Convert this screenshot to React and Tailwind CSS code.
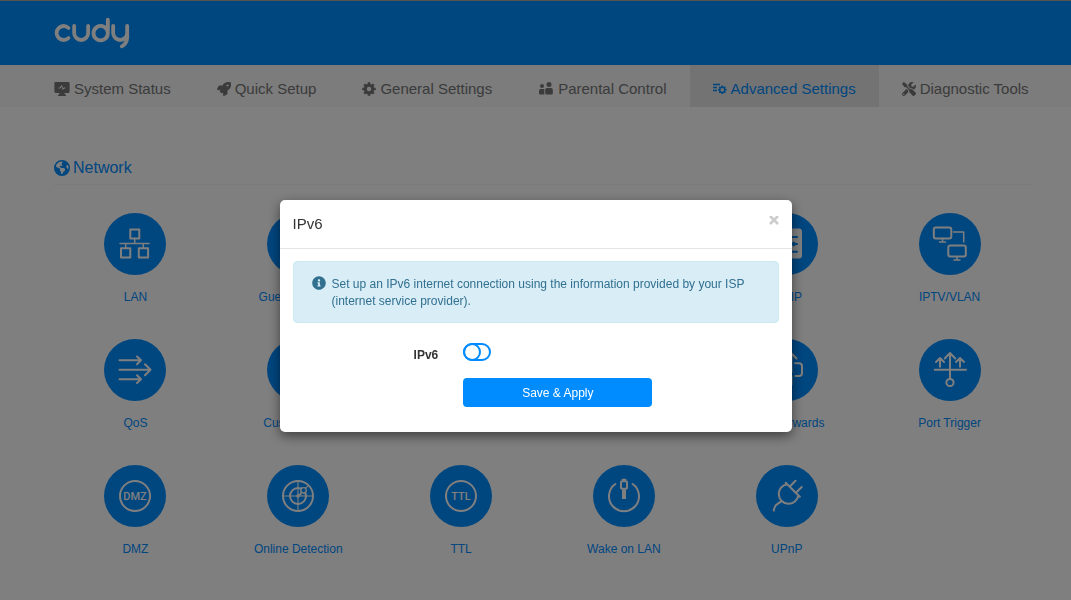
import React from "react";
import { FaRocket, FaTools, FaInfoCircle } from "react-icons/fa";
import { FaEarthAmericas } from "react-icons/fa6";

const MonitorPulseIcon = () => (
  <svg viewBox="0 0 16 16" className="size-4" aria-hidden="true">
    <path
      fill="currentColor"
      d="M1.5 1h13A1.2 1.2 0 0 1 15.6 2.2v8.6a1.2 1.2 0 0 1-1.1 1.2H10.5l.5 1.8h1v1.2H4v-1.2h1l.5-1.8H1.5A1.2 1.2 0 0 1 .4 10.8V2.2A1.2 1.2 0 0 1 1.5 1z"
    />
    <path d="M4.500 7h1.800l1.400-2.500 1.300 3.800 .9-1.300H11.500" fill="none" stroke="#f8f8f8" strokeWidth="1" />
  </svg>
);

const FamilyIcon = () => (
  <svg viewBox="0 0 16 16" className="size-4" fill="currentColor" aria-hidden="true">
    <circle cx="4" cy="5" r="2" />
    <circle cx="11" cy="3.500" r="2.500" />
    <path d="M1 9.500A1.500 1.500 0 0 1 2.500 8h3.800V13.500H2a1 1 0 0 1-1-1z" />
    <path d="M7.200 8.800A1.800 1.800 0 0 1 9 7h4a1.800 1.800 0 0 1 1.800 1.800v3.500a1.200 1.200 0 0 1-1.200 1.200H8.400a1.200 1.200 0 0 1-1.200-1.200z" />
  </svg>
);

const GearIcon = () => (
  <svg viewBox="0 0 14 14" className="size-3.5" fill="none" stroke="currentColor" aria-hidden="true">
    <circle cx="7" cy="7" r="3.700" strokeWidth="3" />
    <path
      strokeWidth="2.600"
      d="M7 .3V3M7 11V13.700M.3 7H3M11 7H13.700M2.300 2.300L4 4M10 10L11.700 11.700M2.300 11.700L4 10M10 4L11.700 2.300"
    />
  </svg>
);

const ListGearIcon = () => (
  <svg viewBox="0 0 14 14" className="size-3.5" fill="none" stroke="currentColor" aria-hidden="true">
    <path strokeWidth="1.400" d="M0 2.500H7M0 5.500H4M0 8.500H4" />
    <circle cx="9.300" cy="7.800" r="2.600" strokeWidth="1.500" />
    <path
      strokeWidth="1.600"
      d="M9.300 3.500V5.300M9.300 10.300V12.100M5 7.800H6.800M11.800 7.800H13.600M6.300 4.800L7.500 6M11.100 9.600L12.300 10.800M6.300 10.800L7.500 9.600M11.100 6L12.300 4.800"
    />
  </svg>
);

const Logo = () => (
  <svg
    viewBox="0 0 230 96"
    className="h-8 w-[77px]"
    fill="none"
    stroke="white"
    strokeWidth="11.500"
    strokeLinecap="round"
    strokeLinejoin="round"
    role="img"
    aria-label="cudy"
  >
    <path d="M43 33A21 21 0 1 0 43 63" />
    <path d="M60 27V48A21 21 0 0 0 102 48V27" />
    <path d="M161 8V49A21.500 21.500 0 1 1 161 48" />
    <path d="M177 27V48A21 21 0 0 0 219 48V27M219 46V62Q218 80 203 88" />
  </svg>
);

const drawings = {
  lan: (
    <>
      <rect x="26.300" y="16.500" width="9" height="9" />
      <rect x="17" y="35.300" width="9.300" height="9.300" />
      <rect x="34.800" y="35.300" width="9.300" height="9.300" />
      <path d="M16 30.500H45M30.700 25.500V30.500M21.700 30.500V35M39.300 30.500V35" strokeWidth="1.500" />
    </>
  ),
  guest: (
    <path d="M16 26A21 21 0 0 1 46 26M21 32A14 14 0 0 1 41 32M26 38A7 7 0 0 1 36 38M31 43V44" />
  ),
  list: (
    <>
      <rect x="16" y="15.500" width="30" height="30" rx="3" fill="white" stroke="none" />
      <path d="M34 24H41M34 31H41M34 38.700H41M21 24H29M21 31H29M21 38.700H29" stroke="#008cff" />
      <path d="M37.500 29.500L39.500 31L37.500 32.500" stroke="#008cff" />
    </>
  ),
  iptv: (
    <>
      <rect x="14.800" y="14.500" width="17.500" height="11" rx="2" />
      <path d="M23.500 26V29M20.500 29H26.500M34.500 19H44.700V29" strokeWidth="1.500" />
      <rect x="29.300" y="32.500" width="17.500" height="11" rx="2" />
      <path d="M38 44V47M35 47H41" strokeWidth="1.500" />
    </>
  ),
  qos: (
    <path d="M15.500 21.300H37M33 17.500L37 21.300L33 25.200M15.500 30.700H46.500M41 25.300L46.500 30.700L41 36.200M15.500 40.200H37M33 36.300L37 40.200L33 44" />
  ),
  globe: (
    <>
      <circle cx="31" cy="31" r="15" />
      <path d="M16 31H46M31 16C22 24 22 38 31 46C40 38 40 24 31 16" />
    </>
  ),
  forward: (
    <path d="M30.500 19.500L35.500 14.500L40.500 19.500M35.500 15V33M39 24.300H43A3 3 0 0 1 46 27.300V34A3 3 0 0 1 43 37H39.500M31.500 37H19A3 3 0 0 1 16 34V27.300A3 3 0 0 1 19 24.300H31.500M35.500 37V45.500" />
  ),
  trigger: (
    <>
      <path d="M15.700 30.700H47M31 14.500V39.500M25.700 19.500L31 14L36.300 19.500M21 19.500V27.700M17 23L21 19L25 23M41 19.500V27.700M37 23L41 19L45 23" />
      <circle cx="31" cy="43.500" r="3.600" />
    </>
  ),
  dmz: (
    <>
      <circle cx="31" cy="31" r="15" />
      <text x="31" y="35" textAnchor="middle" fill="white" stroke="none" className="font-[Roboto] text-[11px] font-medium">DMZ</text>
    </>
  ),
  detection: (
    <>
      <circle cx="31" cy="31" r="15" />
      <circle cx="31" cy="31" r="8" />
      <path d="M31 16V46M16 31H46M31 31L34.500 27.500M34 22.500V30" strokeWidth="1.100" />
      <circle cx="36.600" cy="25.300" r="2.700" fill="#008cff" strokeWidth="1.300" />
      <circle cx="31" cy="31" r="1.800" fill="white" stroke="none" />
      <path d="M38.500 23.300L40.500 21.300" strokeWidth="1.100" />
    </>
  ),
  ttl: (
    <>
      <circle cx="31" cy="31" r="15" />
      <text x="31" y="35" textAnchor="middle" fill="white" stroke="none" className="font-[Roboto] text-[11px] font-medium">TTL</text>
    </>
  ),
  wake: (
    <>
      <path d="M22.300 19A15 15 0 1 0 39.700 19" />
      <rect x="28" y="16.300" width="6" height="7.500" rx="1" />
      <path d="M29.500 14.800H32.500" />
      <path d="M31 24.500V34" strokeWidth="4" strokeLinecap="butt" />
    </>
  ),
  plug: (
    <path d="M29.700 17.700L43.800 31.700M31.300 19.300A9.800 9.800 0 1 0 42.300 30.300M34.300 21L39.500 15.800M40.500 27.200L45.700 22M25.500 36C23 38.500 20 39 19 41.500C18.300 43.200 18 44 17.800 45.500" />
  ),
};

const tabs = [
  { label: "System Status", icon: <MonitorPulseIcon /> },
  { label: "Quick Setup", icon: <FaRocket className="size-3.5" /> },
  { label: "General Settings", icon: <GearIcon /> },
  { label: "Parental Control", icon: <FamilyIcon /> },
  { label: "Advanced Settings", icon: <ListGearIcon />, active: true },
  { label: "Diagnostic Tools", icon: <FaTools className="size-3.5" /> },
];

const features = [
  { label: "LAN", icon: "lan" },
  { label: "Guest Network", icon: "guest" },
  { label: "My IP", icon: "list", column: "col-start-5" },
  { label: "IPTV/VLAN", icon: "iptv" },
  { label: "QoS", icon: "qos" },
  { label: "Custom DNS", icon: "globe" },
  { label: "Port Forwards", icon: "forward", column: "col-start-5" },
  { label: "Port Trigger", icon: "trigger" },
  { label: "DMZ", icon: "dmz" },
  { label: "Online Detection", icon: "detection" },
  { label: "TTL", icon: "ttl" },
  { label: "Wake on LAN", icon: "wake" },
  { label: "UPnP", icon: "plug" },
];

function Feature({ label, icon, column = "" }) {
  return (
    <a
      href="#"
      className={`flex flex-col items-center gap-[13px] text-[12px] leading-[18px] text-[#008cff] ${column}`}
    >
      <svg
        viewBox="0 0 62 62"
        className="size-[62px] rounded-full bg-[#008cff]"
        fill="none"
        stroke="white"
        strokeWidth="2"
        strokeLinecap="round"
        strokeLinejoin="round"
        aria-hidden="true"
      >
        {drawings[icon]}
      </svg>
      {label}
    </a>
  );
}

function Ipv6Dialog() {
  return (
    <div className="fixed inset-0 flex items-start justify-center bg-black/50 px-4 pt-[200px]">
      <div
        role="dialog"
        aria-modal="true"
        aria-labelledby="dialog-title"
        className="w-full max-w-lg rounded-[5px] bg-white pb-[25px] shadow-[0_4px_12px_rgba(0,0,0,0.5)]"
      >
        <div className="flex items-start justify-between border-b border-[#e5e5e5] px-[13px] py-3">
          <h2 id="dialog-title" className="text-[15px] leading-6 text-[#333]">IPv6</h2>
          <button type="button" aria-label="Close" className="py-1 text-[#ccc]">
            <svg viewBox="0 0 10 10" className="size-2.5" fill="none" stroke="currentColor" strokeWidth="2.600" aria-hidden="true">
              <path d="M1 0L9 8M9 0L1 8" />
            </svg>
          </button>
        </div>
        <div className="px-[13px] pt-3">
          <div className="flex gap-1.5 rounded-[4px] border border-[#cdebf3] bg-[#d9edf7] pt-[14px] pr-4 pb-3 pl-[18px] text-[12px] leading-[17px] text-[#31708f]">
            <FaInfoCircle className="size-3.5 shrink-0" />
            <p>Set up an IPv6 internet connection using the information provided by your ISP (internet service provider).</p>
          </div>
          <form className="mt-5 grid grid-cols-[30%_1fr] gap-x-[25px] gap-y-[13px]" onSubmit={(e) => e.preventDefault()}>
            <label htmlFor="ipv6" className="pt-0.5 text-right text-[12px] leading-[20px] font-bold text-[#333]">IPv6</label>
            <input
              id="ipv6"
              type="checkbox"
              className="h-[18px] w-7 appearance-none rounded-full border-2 border-[#008cff] bg-white before:-mt-0.5 before:-ml-0.5 before:block before:size-[18px] before:rounded-full before:border-2 before:border-[#008cff] checked:bg-[#008cff] checked:before:ml-2 checked:before:bg-white"
            />
            <button type="submit" className="col-start-2 h-[29px] w-3/5 rounded-[4px] bg-[#008cff] text-[12px] text-white">
              Save &amp; Apply
            </button>
          </form>
        </div>
      </div>
    </div>
  );
}

export default function App() {
  return (
    <div className="min-h-screen bg-white font-['Liberation_Sans',Arial,sans-serif]">
      <header className="flex h-[65px] items-center border-t border-[#b0a898] bg-[#008cff] px-[54px]">
        <a href="#"><Logo /></a>
      </header>
      <nav className="flex h-[42px] bg-[#f8f8f8] pl-[31px] text-[15px] text-[#777]">
        {tabs.map((tab) => (
          <a
            key={tab.label}
            href="#"
            className={`flex items-center gap-1 px-[23px] pt-1.5 whitespace-nowrap ${tab.active ? "bg-[#e7e7e7] text-[#008cff]" : ""}`}
          >
            {tab.icon}
            {tab.label}
          </a>
        ))}
      </nav>
      <main className="pt-[49px] pr-10 pl-[54px]">
        <h1 className="flex items-center gap-[3px] border-b border-[#f4f4f4] pb-1 text-[16px] leading-6 text-[#008cff]">
          <FaEarthAmericas className="size-4" />
          Network
        </h1>
        <div className="grid grid-cols-6 gap-y-[33px] pt-7">
          {features.map((feature) => (
            <Feature key={feature.label} {...feature} />
          ))}
        </div>
      </main>
      <Ipv6Dialog />
    </div>
  );
}
